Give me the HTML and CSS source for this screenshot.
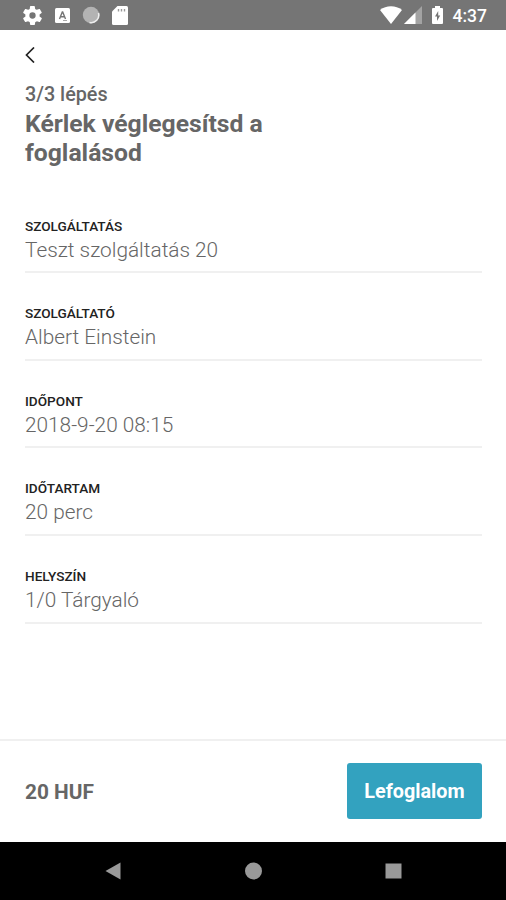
FILE: index.html
```
<!DOCTYPE html>
<html lang="hu">

<head>
    <meta charset="UTF-8">
    <meta name="viewport" content="width=device-width, initial-scale=1.0">
    <title>Foglalás</title>
    <link rel="stylesheet" href="styles.css">
</head>

<body>
    <div class="status-bar">
        <div class="status-icons">
            <svg width="21" height="21" viewBox="1 1 22 22"><path fill="#fff" fill-rule="evenodd" d="M19.4 13a7.500 7.500 0 0 0 0-2l2.100-1.600c.2-.2.300-.4.100-.7l-2-3.400c-.1-.2-.4-.3-.6-.2l-2.500 1a7.300 7.300 0 0 0-1.700-1l-.4-2.600a.5.5 0 0 0-.5-.5h-4a.5.5 0 0 0-.5.5L9.100 5.100a7.300 7.300 0 0 0-1.700 1l-2.500-1c-.2-.1-.5 0-.6.2l-2 3.400c-.1.2-.1.5.1.700L4.600 11a7.500 7.500 0 0 0 0 2l-2.200 1.600c-.2.2-.2.5-.1.700l2 3.400c.1.2.4.3.6.2l2.500-1a7.300 7.300 0 0 0 1.700 1l.4 2.600c0 .3.200.5.500.5h4c.3 0 .5-.2.500-.5l.4-2.600a7.300 7.300 0 0 0 1.700-1l2.500 1c.2.1.5 0 .6-.2l2-3.400c.1-.2.100-.5-.1-.7zM12 15.300a3.300 3.300 0 1 1 0-6.600 3.300 3.300 0 0 1 0 6.600z"/></svg>
            <svg width="15" height="15" viewBox="0 0 15 15"><rect width="15" height="15" rx="1.500" fill="#fff"/><path fill="none" stroke="#757575" stroke-width="1.400" d="M4.500 11 7.300 4h.4l2.800 7M5.500 8.700h4"/><path stroke="#aaa" d="M8 12.500h4"/></svg>
            <svg width="18" height="18" viewBox="0 0 18 18"><circle cx="9" cy="9" r="8.200" fill="#b3b3b3"/><path d="M16.500 7A7.600 7.600 0 0 1 7.500 16.500" fill="none" stroke="#eee" stroke-width="1.600"/></svg>
            <svg width="16" height="19" viewBox="0 0 16 19"><path fill="#fff" d="M5.500 0h9A1.500 1.500 0 0 1 16 1.500v16a1.500 1.500 0 0 1-1.500 1.500h-13A1.500 1.500 0 0 1 0 17.500V5.500z"/><path stroke="#999" stroke-width="1.400" d="M6.500 3v2.500M9.500 3v2.500M12.500 3v2.500"/></svg>
        </div>
        <div class="system-icons">
            <svg width="22" height="18" viewBox="0 0 22 18"><path fill="#fff" d="M0 4a18 18 0 0 1 22 0L11 18z"/></svg>
            <svg width="18" height="18" viewBox="0 0 18 18"><path fill="#a3a3a3" d="M18 0v18H0z"/><path fill="#fff" d="M11.500 6.500V18H0z"/></svg>
            <svg class="battery" width="11" height="18" viewBox="0 0 11 18"><path fill="#fff" d="M3 2V0h5v2h2a1 1 0 0 1 1 1v14a1 1 0 0 1-1 1H1a1 1 0 0 1-1-1V3a1 1 0 0 1 1-1z"/><path fill="#757575" d="M6.200 5 3 10.500h2V15l3.200-5.500h-2z"/></svg>
            <span class="clock">4:37</span>
        </div>
    </div>

    <main class="content">
        <svg class="back" width="10" height="16" viewBox="0 0 10 16"><path d="M9 .5 1.500 8 9 15.500" fill="none" stroke="#222" stroke-width="1.700"/></svg>
        <div class="step">3/3 lépés</div>
        <h1>Kérlek véglegesítsd a<br>foglalásod</h1>

        <div class="field">
            <div class="label">SZOLGÁLTATÁS</div>
            <div class="value">Teszt szolgáltatás 20</div>
        </div>
        <div class="field">
            <div class="label">SZOLGÁLTATÓ</div>
            <div class="value">Albert Einstein</div>
        </div>
        <div class="field">
            <div class="label">IDŐPONT</div>
            <div class="value">2018-9-20 08:15</div>
        </div>
        <div class="field">
            <div class="label">IDŐTARTAM</div>
            <div class="value">20 perc</div>
        </div>
        <div class="field">
            <div class="label">HELYSZÍN</div>
            <div class="value">1/0 Tárgyaló</div>
        </div>
    </main>

    <footer class="booking">
        <span class="price">20 HUF</span>
        <button type="button">Lefoglalom</button>
    </footer>

    <nav class="nav-bar">
        <svg width="18" height="18" viewBox="0 0 18 18"><path fill="#999" d="M15.500 .5v17L.5 9z"/></svg>
        <svg width="18" height="18" viewBox="0 0 18 18"><circle cx="8.500" cy="9" r="8.500" fill="#999"/></svg>
        <svg width="18" height="18" viewBox="0 0 18 18"><path fill="#999" d="M.5 1.500h16v15H.5z"/></svg>
    </nav>
</body>

</html>
```

FILE: styles.css
```
* {
    box-sizing: border-box;
}

body {
    margin: 0;
    height: 100vh;
    display: flex;
    flex-direction: column;
    font-family: Roboto, sans-serif;
    background: #fff;
    color: #666;
}

svg {
    display: block;
    flex-shrink: 0;
}

.status-bar {
    height: 30px;
    display: flex;
    justify-content: space-between;
    align-items: center;
    padding: 0 19px 0 22px;
    background: #757575;
}

.status-icons {
    display: flex;
    align-items: center;
    gap: 12px;
}

.system-icons {
    display: flex;
    align-items: center;
    gap: 2px;
}

.battery {
    margin-left: 8px;
}

.clock {
    margin-left: 8px;
    padding-top: 1px;
    font-size: 17.500px;
    font-weight: 500;
    color: #fff;
}

.content {
    flex: 1;
    padding: 17px 24px 0 25px;
}

.step {
    margin-top: 20px;
    font-size: 19.800px;
    line-height: 24px;
    font-weight: 500;
}

h1 {
    margin: 2px 0 50.600px;
    font-size: 24.700px;
    line-height: 29px;
    font-weight: 700;
}

.field {
    height: 55.600px;
    margin-bottom: 32px;
    border-bottom: 2px solid #f0f0f0;
}

.label {
    font-size: 13.600px;
    line-height: 16px;
    font-weight: 500;
    color: #222;
}

.value {
    margin-top: 2px;
    font-size: 20.800px;
    line-height: 28px;
    font-weight: 300;
}

.booking {
    height: 103px;
    display: flex;
    justify-content: space-between;
    align-items: center;
    padding: 0 24px 2px 25px;
    border-top: 2px solid #f0f0f0;
}

.price {
    padding-top: 2px;
    font-size: 20.800px;
    font-weight: 700;
}

button {
    width: 135px;
    height: 56px;
    padding: 2px 0 0;
    border: none;
    border-radius: 3px;
    background: #33a2bf;
    color: #fff;
    font-family: inherit;
    font-size: 19.800px;
    font-weight: 700;
}

.nav-bar {
    height: 58px;
    display: flex;
    justify-content: center;
    align-items: center;
    gap: 122px;
    padding-left: 1px;
    background: #000;
}
```
